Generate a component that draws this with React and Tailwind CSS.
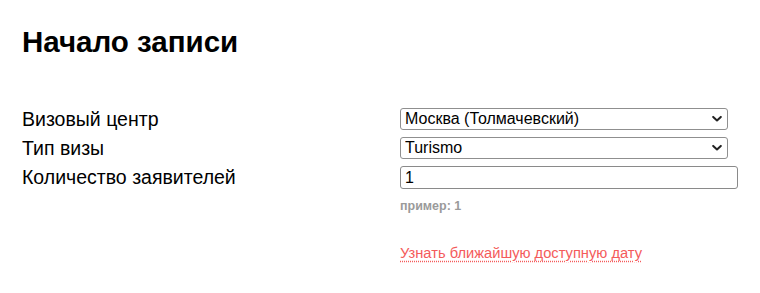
import { useState } from 'react';

function Chevron() {
  return (
    <svg
      width="10"
      height="7"
      viewBox="0 0 10 7"
      className="pointer-events-none absolute right-[6px] top-1/2 -translate-y-1/2"
    >
      <path d="M1.2 1.4 L5 5 L8.8 1.4" fill="none" stroke="#222" strokeWidth="2" strokeLinecap="round" strokeLinejoin="round" />
    </svg>
  );
}

function Select({ value, options, onChange }) {
  return (
    <div className="relative w-[328px]">
      <select
        value={value}
        onChange={(e) => onChange(e.target.value)}
        className="block h-[22px] w-full appearance-none rounded-[3px] border border-[#8f8f8f] bg-white pl-[4px] pr-6 text-[16px] leading-[20px] text-black outline-none"
      >
        {options.map((o) => (
          <option key={o} value={o}>{o}</option>
        ))}
      </select>
      <Chevron />
    </div>
  );
}

export default function App() {
  const [center, setCenter] = useState('Москва (Толмачевский)');
  const [visa, setVisa] = useState('Turismo');
  const [count, setCount] = useState('1');

  return (
    <div className="min-h-screen bg-white px-[22px] pt-[25px] text-black" style={{ fontFamily: '"Liberation Sans", Arial, sans-serif' }}>
      <h1 className="text-[29.5px] font-bold leading-[33px]">Начало записи</h1>

      <div className="mt-[50px] grid grid-cols-[378px_1fr] gap-y-[7px]">
        <label className="text-[19.5px] leading-[22px]">Визовый центр</label>
        <Select
          value={center}
          onChange={setCenter}
          options={['Москва (Толмачевский)', 'Санкт-Петербург', 'Казань']}
        />

        <label className="text-[19.5px] leading-[22px]">Тип визы</label>
        <Select value={visa} onChange={setVisa} options={['Turismo', 'Affari', 'Studio']} />

        <label className="text-[19.5px] leading-[23px]">Количество заявителей</label>
        <div className="flex flex-col">
          <input
            value={count}
            onChange={(e) => setCount(e.target.value)}
            className="block h-[23px] w-[338px] rounded-[3px] border border-[#8a8a8a] bg-white px-[4px] text-[16px] text-black outline-none"
          />
          <span className="mt-[10px] text-[12.5px] font-bold leading-[15px] text-[#9a9a9a]">пример: 1</span>
          <a
            href="#"
            className="mt-[30px] self-start text-[14.7px] leading-[18px] text-[#f45b5b] underline decoration-dotted decoration-[#f45b5b] underline-offset-[3px]"
          >
            Узнать ближайшую доступную дату
          </a>
        </div>
      </div>
    </div>
  );
}
